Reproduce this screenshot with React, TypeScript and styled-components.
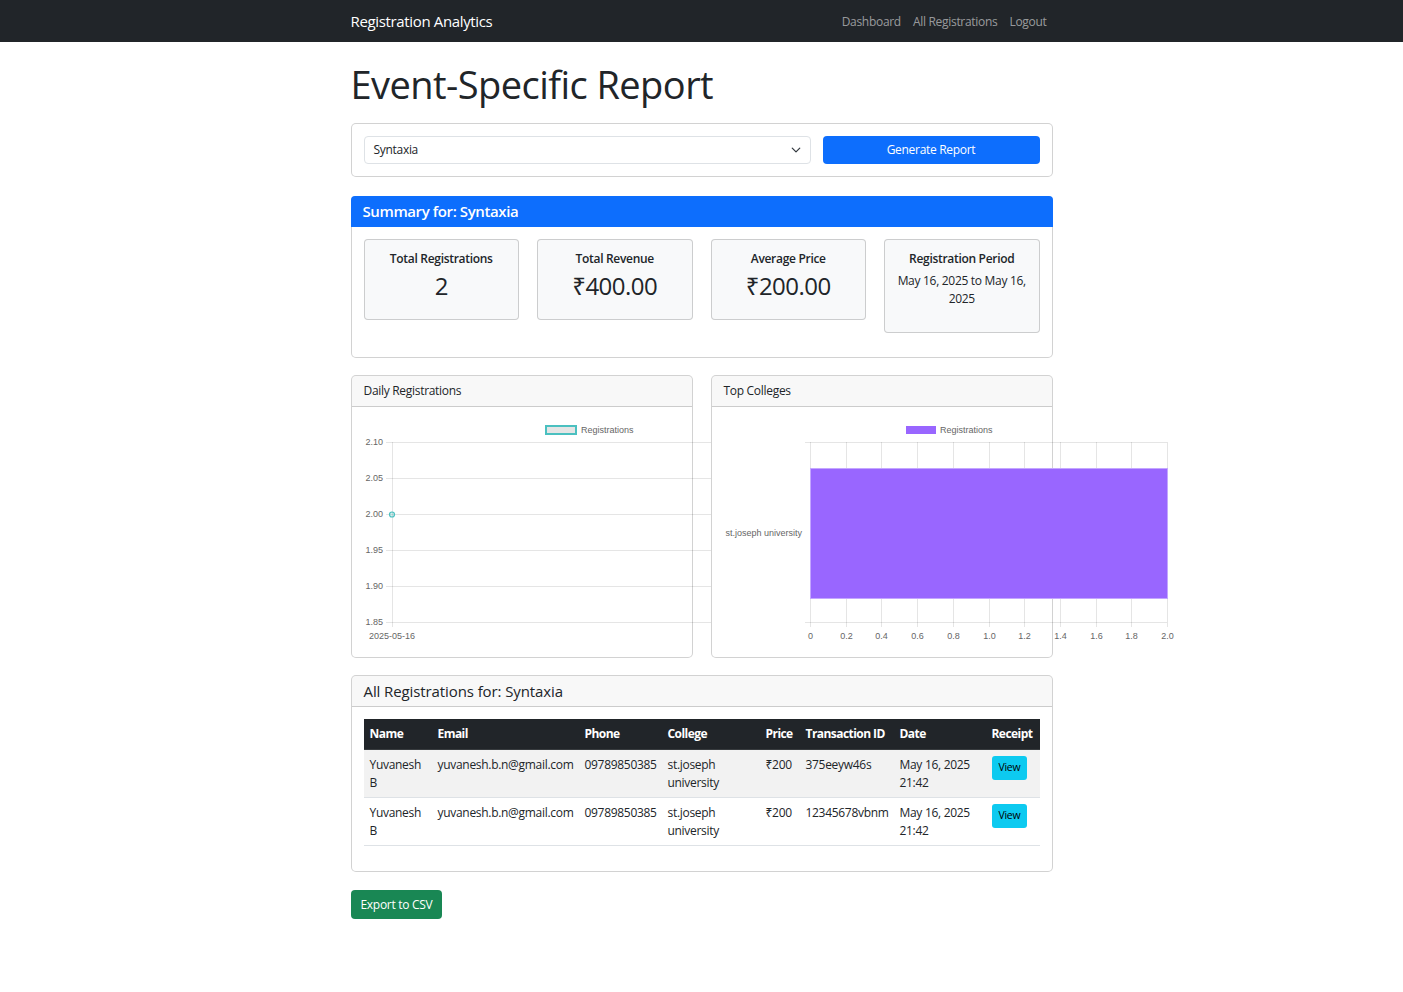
import React from 'react';
import styled, { createGlobalStyle } from 'styled-components';

const Global = createGlobalStyle`
  html, body { margin: 0; padding: 0; background: #fff; }
  body {
    font-family: "Open Sans", "Noto Sans", sans-serif;
    font-size: 12px;
    line-height: 1.5;
    color: #212529;
    letter-spacing: -0.3px;
  }
  * { box-sizing: border-box; }
`;

const NavBar = styled.nav`
  background: #212529;
  height: 42px;
`;
const NavInner = styled.div`
  width: 702px;
  margin: 0 auto;
  height: 100%;
  display: flex;
  align-items: center;
  justify-content: space-between;
  padding-top: 1px;
`;
const Brand = styled.a`
  color: #fff;
  font-size: 15px;
  letter-spacing: -0.35px;
  text-decoration: none;
`;
const NavLinks = styled.div`
  display: flex;
  padding-top: 1px;
`;
const NavLink = styled.a`
  color: rgba(255, 255, 255, 0.55);
  font-size: 12px;
  padding: 0 6px;
  text-decoration: none;
`;

const Container = styled.main`
  width: 702px;
  margin: 0 auto;
  padding-top: 18px;
  padding-bottom: 60px;
`;
const Title = styled.h1`
  font-size: 38px;
  font-weight: 500;
  line-height: 48px;
  letter-spacing: -0.55px;
  margin: 0 0 15px;
`;

const Card = styled.section<{ $mt?: number }>`
  position: relative;
  min-width: 0;
  background: #fff;
  border: 1px solid rgba(0, 0, 0, 0.175);
  border-radius: 5px;
  margin-top: ${(p) => p.$mt ?? 0}px;
`;
const CardHeader = styled.div<{ $primary?: boolean; $size?: number; $bold?: boolean; $spacing?: number }>`
  padding: 6px 12px;
  line-height: 18px;
  font-size: ${(p) => p.$size ?? 12}px;
  font-weight: ${(p) => (p.$bold ? 600 : 400)};
  letter-spacing: ${(p) => p.$spacing ?? -0.3}px;
  background: ${(p) => (p.$primary ? '#0d6efd' : 'rgba(33,37,41,0.03)')};
  color: ${(p) => (p.$primary ? '#fff' : '#212529')};
  border-bottom: 1px solid ${(p) => (p.$primary ? '#0d6efd' : 'rgba(0,0,0,0.175)')};
  border-radius: 4px 4px 0 0;
  margin: ${(p) => (p.$primary ? '-1px -1px 0' : '0')};
`;
const CardBody = styled.div`
  padding: 12px;
`;

const FilterRow = styled.div`
  display: flex;
  gap: 12px;
`;
const Select = styled.div`
  flex: 0 0 447px;
  height: 28px;
  border: 1px solid #dee2e6;
  border-radius: 4px;
  display: flex;
  align-items: center;
  justify-content: space-between;
  padding: 0 9px;
  font-size: 12px;
`;
const Button = styled.button<{ $variant: 'primary' | 'success' | 'info'; $small?: boolean }>`
  font-family: inherit;
  letter-spacing: -0.3px;
  border: 1px solid transparent;
  cursor: pointer;
  font-size: ${(p) => (p.$small ? 10.5 : 12)}px;
  line-height: 1.5;
  padding: ${(p) => (p.$small ? '3px 6px' : '4.5px 9px')};
  border-radius: ${(p) => (p.$small ? 3 : 4)}px;
  background: ${(p) => (p.$variant === 'primary' ? '#0d6efd' : p.$variant === 'success' ? '#198754' : '#0dcaf0')};
  color: ${(p) => (p.$variant === 'info' ? '#000' : '#fff')};
`;
const GenerateButton = styled(Button)`
  flex: 1;
  height: 28px;
  padding-top: 0;
  padding-bottom: 0;
`;

const StatGrid = styled.div`
  display: grid;
  grid-template-columns: repeat(4, minmax(0, 1fr));
  column-gap: 18px;
  align-items: start;
`;
const StatBox = styled.div`
  background: #f8f9fa;
  border: 1px solid rgba(0, 0, 0, 0.175);
  border-radius: 4px;
  padding: 12px 10px;
  text-align: center;
  margin-bottom: 12px;
`;
const StatLabel = styled.h6`
  margin: 0 0 6px;
  font-size: 12px;
  font-weight: 600;
  line-height: 1.2;
`;
const StatValue = styled.h2`
  margin: 0 0 6px;
  font-size: 24px;
  font-weight: 400;
  letter-spacing: -0.5px;
  line-height: 1.2;
`;
const StatText = styled.p`
  margin: 0 0 12px;
  font-size: 12px;
  line-height: 18px;
`;

const ChartsRow = styled.div`
  display: grid;
  grid-template-columns: repeat(2, minmax(0, 1fr));
  gap: 18px;
  margin-top: 17px;
`;
const ChartBody = styled.div`
  padding: 12px;
  overflow: visible;
`;
const ChartSvg = styled.svg`
  display: block;
  overflow: visible;
  font-family: "Liberation Sans", Arial, sans-serif;
  letter-spacing: 0;
`;

const Table = styled.table`
  width: 100%;
  border-collapse: collapse;
  table-layout: fixed;
  margin-bottom: 13px;
  font-size: 12px;
`;
const Th = styled.th`
  background: #212529;
  color: #fff;
  text-align: left;
  font-weight: 700;
  padding: 6px;
  line-height: 18px;
  letter-spacing: -0.55px;
  white-space: nowrap;
  border-bottom: 1px solid #373b3e;
`;
const Tr = styled.tr<{ $striped?: boolean }>`
  background: ${(p) => (p.$striped ? 'rgba(0,0,0,0.05)' : '#fff')};
`;
const Td = styled.td`
  padding: 6px 6px 5px;
  line-height: 18px;
  vertical-align: top;
  border-bottom: 1px solid #dee2e6;
`;
const ExportWrap = styled.div`
  margin-top: 18px;
`;

const gridColor = 'rgba(0,0,0,0.1)';
const tickColor = '#666';

function DailyChart() {
  const ticks = ['2.10', '2.05', '2.00', '1.95', '1.90', '1.85'];
  return (
    <ChartSvg width={455} height={226}>
      {ticks.map((t, i) => {
        const y = 23 + i * 36;
        return (
          <g key={t}>
            <line x1={22} x2={455} y1={y + 0.5} y2={y + 0.5} stroke={gridColor} />
            <text x={19} y={y + 3} textAnchor="end" fontSize={9} fill={tickColor}>{t}</text>
          </g>
        );
      })}
      <line x1={28.5} x2={28.5} y1={23} y2={208} stroke={gridColor} />
      <circle cx={28} cy={95.5} r={2.5} fill="rgba(75,192,192,0.25)" stroke="rgb(75,192,192)" strokeWidth={1.2} />
      <rect x={182} y={7} width={30} height={8} fill="rgba(0,0,0,0.1)" stroke="rgb(75,192,192)" strokeWidth={2} />
      <text x={217} y={14} fontSize={9} fill={tickColor}>Registrations</text>
      <text x={28} y={220} textAnchor="middle" fontSize={9} fill={tickColor}>2025-05-16</text>
    </ChartSvg>
  );
}

function CollegeChart() {
  const labels = ['0', '0.2', '0.4', '0.6', '0.8', '1.0', '1.2', '1.4', '1.6', '1.8', '2.0'];
  const x0 = 86;
  const step = 35.7;
  return (
    <ChartSvg width={455} height={226}>
      {labels.map((l, i) => {
        const x = Math.round(x0 + i * step) + 0.5;
        return (
          <g key={l}>
            <line x1={x} x2={x} y1={23} y2={208} stroke={gridColor} />
            <text x={x} y={220} textAnchor="middle" fontSize={9} fill={tickColor}>{l}</text>
          </g>
        );
      })}
      <line x1={81} x2={443} y1={23.5} y2={23.5} stroke={gridColor} />
      <line x1={81} x2={443} y1={203.5} y2={203.5} stroke={gridColor} />
      <rect x={86.5} y={49.5} width={357} height={130} fill="#9966ff" stroke="#c4a6ff" strokeWidth={1} />
      <text x={78} y={117} textAnchor="end" fontSize={9} fill={tickColor}>st.joseph university</text>
      <rect x={182} y={7} width={30} height={8} fill="#9966ff" />
      <text x={216} y={14} fontSize={9} fill={tickColor}>Registrations</text>
    </ChartSvg>
  );
}

const rows = [
  { tx: '375eeyw46s', striped: true },
  { tx: '12345678vbnm', striped: false },
];
const colWidths = [68, 147, 83, 98, 40, 94, 92, 54];
const heads = ['Name', 'Email', 'Phone', 'College', 'Price', 'Transaction ID', 'Date', 'Receipt'];

export default function App() {
  return (
    <>
      <Global />
      <NavBar>
        <NavInner>
          <Brand>Registration Analytics</Brand>
          <NavLinks>
            <NavLink>Dashboard</NavLink>
            <NavLink>All Registrations</NavLink>
            <NavLink>Logout</NavLink>
          </NavLinks>
        </NavInner>
      </NavBar>
      <Container>
        <Title>Event-Specific Report</Title>
        <Card>
          <CardBody>
            <FilterRow>
              <Select>
                <span>Syntaxia</span>
                <svg width="10" height="10" viewBox="0 0 16 16">
                  <path d="M2 5l6 6 6-6" fill="none" stroke="#343a40" strokeWidth="2" strokeLinecap="round" strokeLinejoin="round" />
                </svg>
              </Select>
              <GenerateButton $variant="primary">Generate Report</GenerateButton>
            </FilterRow>
          </CardBody>
        </Card>

        <Card $mt={19}>
          <CardHeader $primary $size={15} $bold $spacing={-0.4}>Summary for: Syntaxia</CardHeader>
          <CardBody>
            <StatGrid>
              <StatBox>
                <StatLabel>Total Registrations</StatLabel>
                <StatValue>2</StatValue>
              </StatBox>
              <StatBox>
                <StatLabel>Total Revenue</StatLabel>
                <StatValue>₹400.00</StatValue>
              </StatBox>
              <StatBox>
                <StatLabel>Average Price</StatLabel>
                <StatValue>₹200.00</StatValue>
              </StatBox>
              <StatBox>
                <StatLabel>Registration Period</StatLabel>
                <StatText>May 16, 2025 to May 16, 2025</StatText>
              </StatBox>
            </StatGrid>
          </CardBody>
        </Card>

        <ChartsRow>
          <Card>
            <CardHeader>Daily Registrations</CardHeader>
            <ChartBody>
              <DailyChart />
            </ChartBody>
          </Card>
          <Card>
            <CardHeader>Top Colleges</CardHeader>
            <ChartBody>
              <CollegeChart />
            </ChartBody>
          </Card>
        </ChartsRow>

        <Card $mt={17}>
          <CardHeader $size={15} $spacing={-0.1}>All Registrations for: Syntaxia</CardHeader>
          <CardBody>
            <Table>
              <colgroup>
                {colWidths.map((w, i) => (
                  <col key={i} style={{ width: w }} />
                ))}
              </colgroup>
              <thead>
                <tr>
                  {heads.map((h) => (
                    <Th key={h}>{h}</Th>
                  ))}
                </tr>
              </thead>
              <tbody>
                {rows.map((r) => (
                  <Tr key={r.tx} $striped={r.striped}>
                    <Td>Yuvanesh B</Td>
                    <Td>yuvanesh.b.n@gmail.com</Td>
                    <Td>09789850385</Td>
                    <Td>st.joseph university</Td>
                    <Td>₹200</Td>
                    <Td>{r.tx}</Td>
                    <Td>May 16, 2025 21:42</Td>
                    <Td>
                      <Button $variant="info" $small>View</Button>
                    </Td>
                  </Tr>
                ))}
              </tbody>
            </Table>
          </CardBody>
        </Card>

        <ExportWrap>
          <Button $variant="success">Export to CSV</Button>
        </ExportWrap>
      </Container>
    </>
  );
}
